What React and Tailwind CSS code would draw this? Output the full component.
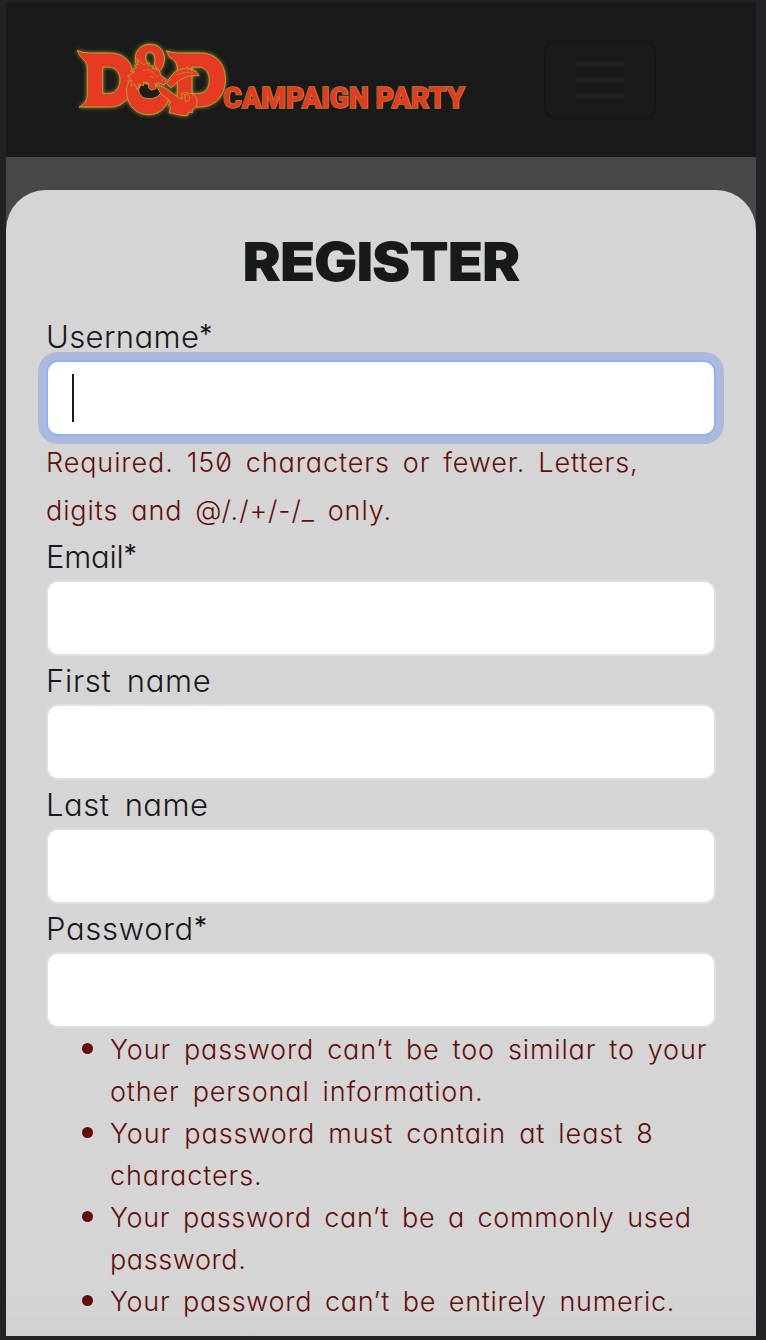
const labelFont =
  "font-['Inter',sans-serif] font-light [font-feature-settings:'cv11','zero']";

function Logo() {
  return (
    <svg className="block h-[100px] w-[420px] shrink-0 overflow-visible" viewBox="0 0 1260 300" role="img" aria-label="D&D Campaign Party">
      <defs>
        <filter id="glow" x="-10%" y="-10%" width="120%" height="120%">
          <feDropShadow dx="0" dy="0" stdDeviation="7" floodColor="#b5b53c" floodOpacity="0.8" />
        </filter>
      </defs>
      <g filter="url(#glow)" fill="#e63a22" stroke="#c29a32" strokeWidth="3" strokeLinejoin="round" fillRule="evenodd">
        <path d="M52 61 Q66 69 86 69 H148 C188 69 219 91 219 143 C219 203 188 231 150 231 H57 Q81 221 82 196 V112 C81 88 59 86 52 61 Z M128 111 V191 H143 C166 191 180 176 180 149 C180 124 164 111 144 111 Z" />
        <path d="M319 62 Q334 69 354 69 H420 C466 69 496 99 496 149 C496 202 461 231 417 231 H352 V112 Q348 88 330 83 Z M396 111 V191 H411 C436 191 448 176 448 149 C448 124 434 111 414 111 Z" />
        <path d="M226 91 C225 60 243 43 270 43 C298 43 313 62 313 87 C313 104 306 117 296 126 L283 102 C288 94 285 66 270 66 C255 66 253 86 263 99 L244 120 C233 113 227 103 226 91 Z" />
        <path d="M229 132 C205 149 199 170 200 187 C202 229 231 254 266 254 C299 254 318 232 326 209 L305 184 C298 193 288 192 270 192 C247 192 233 187 235 174 C237 164 244 157 256 152 Z" stroke="none" />
        <path d="M212 146 C203 158 199 172 200 187 C202 229 231 254 266 254 C299 254 318 232 326 209" fill="none" />
        <path d="M237 176 Q239 168 249 160 L290 168 L303 187 C297 199 285 206 268 206 C246 206 234 192 237 176 Z" fill="#1a1a1a" />
        <path d="M202 139 L225 124 L211 124 L230 112 L223 106 L235 104 L231 85 L249 104 L269 98 L264 106 L282 110 L276 115 L297 120 L302 136 L319 148 L313 165 L295 158 L285 163 L288 176 L275 181 L265 174 L267 160 L251 155 L250 168 L237 161 L231 180 L224 162 L212 169 L216 150 L202 155 L211 143 Z" strokeWidth="2.5" />
        <path d="M320 161 C335 129 353 117 373 116 L383 111 L383 118 L397 114 L393 122 C406 120 414 129 417 137 C388 133 358 144 334 174 Z" />
        <path d="M286 163 L313 173 C341 190 350 203 367 207 L365 190 C387 184 410 194 411 213 C412 230 401 238 397 238 L397 248 L386 246 L382 257 C354 257 340 248 327 249 L332 233 L325 226 L333 216 L302 190 Z M374 194 L376 215 C391 215 392 200 384 194 Z" />
        <path d="M248 122 Q270 113 283 132 L295 141 M268 138 L283 144 M306 154 L313 147 M350 134 L380 126 L400 129" fill="none" strokeWidth="2" />
      </g>
      <text x="490" y="235" textLength="724" lengthAdjust="spacingAndGlyphs" fontFamily="Roboto, sans-serif" fontWeight="900" fontSize="91" fill="#e63a22" stroke="#a98432" strokeWidth="5" paintOrder="stroke">
        CAMPAIGN PARTY
      </text>
    </svg>
  );
}

function Field({ label, labelClass, required, focused }) {
  return (
    <>
      <div className={`${labelFont} flex h-12 whitespace-nowrap text-[31px] leading-[49px] text-[#18191b]`}>
        <span className={labelClass}>{label}</span>
        {required && <span className="-mt-[3px] text-[26px] font-normal">*</span>}
      </div>
      <div
        className={
          focused
            ? "flex h-[76px] items-center rounded-xl border-2 border-[#8db4fb] bg-white px-6 shadow-[0_0_0_8px_#acb9dd]"
            : "h-[76px] rounded-xl border-2 border-[#dee1e4] bg-white"
        }
      >
        {focused && <span className="h-12 w-0.5 bg-[#18191b]" />}
      </div>
    </>
  );
}

const rules = [
  [
    ["Your password can’t be too similar to your", "tracking-[0.86px]"],
    ["other personal information.", "tracking-[0.87px]"],
  ],
  [
    ["Your password must contain at least 8", "tracking-[0.93px]"],
    ["characters.", "tracking-[0.9px]"],
  ],
  [
    ["Your password can’t be a commonly used", "tracking-[0.66px]"],
    ["password.", "tracking-[0.6px]"],
  ],
  [["Your password can’t be entirely numeric.", "tracking-[0.7px]"]],
];

export default function App() {
  return (
    <div className="h-[1340px] w-[766px] overflow-hidden bg-[#232325] pt-0.5 pr-2.5 pb-1 pl-1.5">
      <div className="flex h-[1334px] flex-col bg-[#484848]">
        <header className="flex h-[155px] shrink-0 items-start bg-[#1a1a1a]">
          <div className="w-[538px] pt-7 pl-[54px]">
            <Logo />
          </div>
          <button aria-label="Menu" className="mt-[38px] flex h-20 w-28 flex-col items-center justify-center gap-3 rounded-xl border-2 border-[#151515]">
            <span className="h-1 w-12 rounded-full bg-[#212225]" />
            <span className="h-1 w-12 rounded-full bg-[#212225]" />
            <span className="h-1 w-12 rounded-full bg-[#212225]" />
          </button>
        </header>
        <main className="mt-[33px] flex-1 rounded-t-[40px] bg-[linear-gradient(#d5d5d5_96%,#d1d1d1)] px-10">
          <h1 className="flex h-[122px] items-center justify-center pt-5 font-['Inter',sans-serif] text-[54px] font-black text-[#18191a]">
            <span className="scale-x-[1.065] tracking-[-1px]">REGISTER</span>
          </h1>
          <Field label="Username" labelClass="tracking-[0.4px]" required focused />
          <p className={`${labelFont} whitespace-nowrap text-[27px] leading-[48px] text-[#620e0a] [word-spacing:4.5px]`}>
            <span className="block pt-[3px] -mb-[3px] tracking-[0.9px]">Required. 150 characters or fewer. Letters,</span>
            <span className="block pt-[3px] -mb-[3px] tracking-[0.9px]">digits and @/./+/-/_ only.</span>
          </p>
          <Field label="Email" labelClass="tracking-[-0.2px]" required />
          <Field label="First name" labelClass="tracking-[0.7px] [word-spacing:6px]" />
          <Field label="Last name" labelClass="tracking-[0.5px] [word-spacing:6px]" />
          <Field label="Password" labelClass="tracking-[0.7px]" required />
          <ul className={`${labelFont} whitespace-nowrap pt-px text-[27px] leading-[42px] text-[#620e0a] [word-spacing:4.5px]`}>
            {rules.map((lines) => (
              <li key={lines[0][0]} className="flex">
                <span className="mt-3.5 mr-[17px] ml-9 size-[11px] shrink-0 rounded-full bg-[#620e0a]" />
                <div>
                  {lines.map(([text, cls]) => (
                    <div key={text} className="flex">
                      <span className={cls}>{text}</span>
                    </div>
                  ))}
                </div>
              </li>
            ))}
          </ul>
        </main>
      </div>
    </div>
  );
}
